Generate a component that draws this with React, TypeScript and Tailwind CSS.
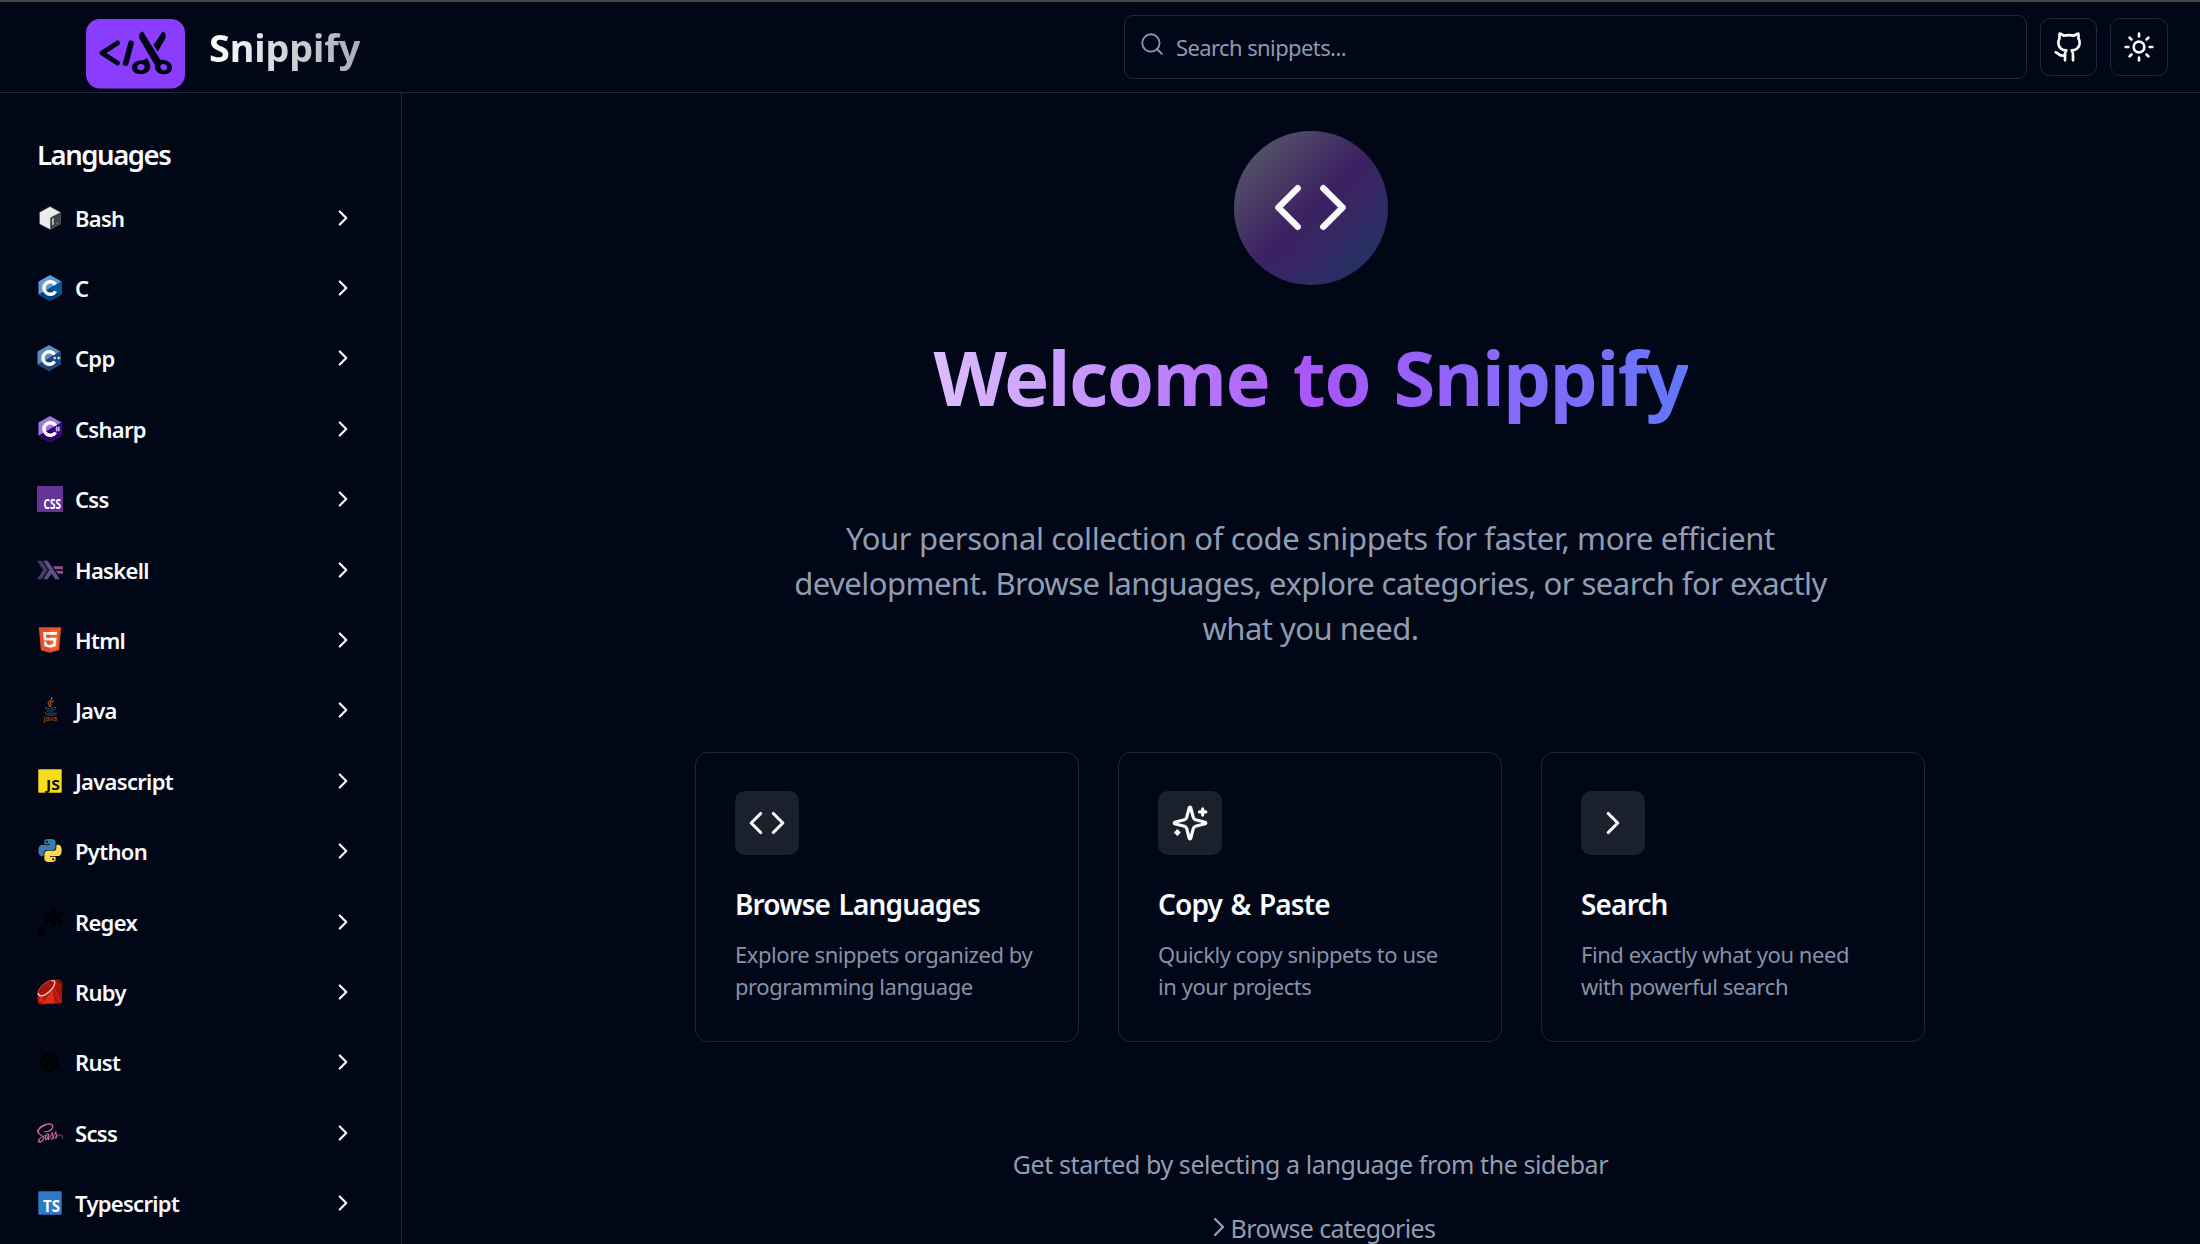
import type { ReactNode } from "react";
import { ChevronRight, Code, Github, Search, Sun } from "lucide-react";
import { FaSass } from "react-icons/fa";
import { SiRust } from "react-icons/si";

const INK = "#020617";

function Logo() {
  return (
    <svg viewBox="0 0 99 70" className="mt-[13px] h-[70px] w-[99px] shrink-0">
      <rect width="99" height="69.6" rx="14" fill="#8b3dff" />
      <g fill="none" stroke={INK} strokeLinecap="round" strokeLinejoin="round" strokeWidth="5">
        <path d="M31.5 24 16 34l15.500 10" />
        <path d="M45 24.200 39.700 44.400" strokeWidth="5.600" />
      </g>
      <path d="M56.800 12.600c-2 .4-3.700 2.200-3.700 4.600 0 1.500.6 2.800 1.400 4.200L69.500 47l6-4.600z" fill={INK} />
      <path d="M76.600 12.600c2 .5 3.200 2.200 3.100 4.400 0 1.200-.4 2.300-1 3.400l-7 12.300-4.100-6.900z" fill={INK} />
      <path
        fillRule="evenodd"
        fill={INK}
        d="M60.600 38.700c2 3 3.700 5.800 3.700 8.800 0 4.600-4.200 7.700-9.300 7.700s-9.100-2.600-9.100-6.700c0-4.300 4.200-6.800 8.300-7.100 3.200-.3 5.200-.7 6.400-2.700zM54.900 45c-2.200 0-3.700 1.400-3.700 3.200s1.300 3.100 3.500 3.100c2.300 0 4-1.500 4-3.400 0-1.700-1.500-2.900-3.800-2.900z"
      />
      <path
        fillRule="evenodd"
        fill={INK}
        d="M75 40.800c6.400 0 11.100 3.200 11.100 7.700 0 4.100-3.600 6.800-8.300 6.800-5.400 0-9-3.300-9-8zm2.500 4.200c-2.100 0-3.400 1.100-3.200 2.900.3 2 1.900 3.400 3.900 3.400 2.100 0 3.300-1.400 3.100-3.100-.2-1.900-1.800-3.200-3.800-3.200z"
      />
    </svg>
  );
}

function HexIcon({ light, mid, dark, suffix, shift }: { light: string; mid: string; dark: string; suffix?: "++" | "#"; shift?: boolean }) {
  return (
    <svg viewBox="0 0 26 26" className={shift ? "size-[26px] -translate-x-px" : "size-[26px]"}>
      <path d="M13 0 24.500 6.500v13L13 26 1.500 19.500v-13z" fill={light} />
      <path d="M24.500 6.500v13L13 26 1.500 19.500z" fill={dark} />
      <path d="M24.200 6.400q.3.400.3 1v11.400q0 .6-.4 1L13 13z" fill={mid} />
      <path d="M18.600 9.700A6.300 6.300 0 1 0 18.600 16.300" fill="none" stroke="#fff" strokeWidth="3.400" />
      {suffix === "++" && <path d="M17.400 13h2.800m-1.400-1.400v2.800M21.300 13h2.800m-1.400-1.400v2.800" stroke="#fff" strokeWidth="1" />}
      {suffix === "#" && <path d="M19.700 10.500v5m2-5v5m-3.200-3.500h4.600m-4.600 2h4.600" stroke="#fff" strokeWidth=".7" />}
    </svg>
  );
}

function TileIcon({ label, tile, ink, size, full }: { label: string; tile: string; ink: string; size: number; full?: boolean }) {
  const inset = full ? 0 : 1.3;
  return (
    <svg viewBox="0 0 26 26" className="size-[26px]">
      <rect x={inset} y={inset} width={26 - inset * 2} height={26 - inset * 2} rx={full ? 0 : 0.8} fill={tile} />
      <text x={full ? 24 : 23} y={full ? 23.4 : 22.4} textAnchor="end" textLength={full ? 17.5 : label === "TS" ? 17 : 14} lengthAdjust="spacingAndGlyphs" fontFamily="Noto Sans" fontWeight="700" fontSize={size} fill={ink}>
        {label}
      </text>
    </svg>
  );
}

function BashIcon() {
  return (
    <svg viewBox="0 0 26 26" className="size-[26px]">
      <path d="M13 1.500 23.500 7.300v11.600L13 24.500 2.500 18.900V7.300z" fill="#ececec" stroke="#4a4d4f" strokeWidth=".6" />
      <path d="M13.200 24.500V13.600q0-.9.8-1.400l9.500-5v11.700z" fill="#3c4245" />
      <path d="M16.900 14.200c-1.800.2-2.200 1.500-1.200 2.300s1.200 2.100-.6 2.600M16 13.200v7" fill="none" stroke="#f0f0f0" strokeWidth=".8" />
      <path d="m18.700 19 2.600-1.400" stroke="#4da925" strokeWidth=".9" />
    </svg>
  );
}

function HaskellIcon() {
  return (
    <svg viewBox="0 0 24 24" className="size-[26px]">
      <path d="M0 3.535 5.647 12 0 20.465h4.235L9.883 12 4.235 3.535z" fill="#453a62" />
      <path d="M5.647 3.535 11.294 12l-5.647 8.465h4.235l3.530-5.290 3.530 5.290h4.234L9.883 3.535z" fill="#5e5086" />
      <path d="M14.588 8.473l1.883 2.822H24V8.473zm2.824 4.232 1.882 2.822H24v-2.822z" fill="#8f4e8b" />
    </svg>
  );
}

function HtmlIcon() {
  return (
    <svg viewBox="0 0 128 128" className="size-[26px]">
      <path fill="#e44d26" d="M19.037 113.876 9.032 1.661h109.936l-10.016 112.198-45.019 12.480z" />
      <path fill="#f16529" d="m64 116.800 36.378-10.086 8.559-95.878H64z" />
      <path fill="#ebebeb" d="M64 52.455H45.788L44.530 38.361H64V24.599H29.489l.33 3.692 3.382 37.927H64zm0 35.743-.061.017-15.327-4.140-.979-10.975H33.816l1.928 21.609 28.193 7.826.063-.017z" />
      <path fill="#fff" d="M63.952 52.455v13.763h16.947l-1.597 17.849-15.350 4.143v14.319l28.215-7.820.207-2.325 3.234-36.233.335-3.696h-3.708zm0-27.856v13.762h33.244l.276-3.092.628-6.978.329-3.692z" />
    </svg>
  );
}

function JavaIcon() {
  return (
    <svg viewBox="0 0 26 26" className="size-[26px]">
      <g fill="none" strokeLinecap="round">
        <path d="M14.600.4c1.700 3-3.900 3.800-3.400 6.200.2 1 1.400 1.600 1.500 2.700M16.600 3.900c-2.500.8-3.800 2-2.800 3.200.7.900.3 1.500-.3 2.200" stroke="#a85410" strokeWidth="1.200" />
        <path d="M9.700 10.200c-2.800.7-2 1.300 2.600 1.200 2 0 3.800-.3 4.800-.6M9.800 12.700c1 .8 4.600.8 6.200.1M10.400 14.600c1 .7 3.500.7 5 .1M17.400 10.300c2.400-.4 2.300 1.800-.3 2.900M8.500 15.300c-4 1.500 8.500 2.700 10.500.3M9.400 18c4 .6 9 .3 10.400-1" stroke="#2f5468" strokeWidth=".9" />
      </g>
      <text x="6.400" y="24.200" textLength="13.500" lengthAdjust="spacingAndGlyphs" fontFamily="Noto Sans" fontSize="7.500" fill="#b85f12">
        Java
      </text>
    </svg>
  );
}

function PythonIcon() {
  return (
    <svg viewBox="-1.500 -1 27 27" className="size-[26px]">
      <path
        fill="#3d7bab"
        d="M14.250.180l.9.2.73.26.59.3.45.32.34.34.25.34.16.33.1.3.04.26.02.2-.01.13V8.500l-.05.63-.13.55-.21.46-.26.38-.3.31-.33.25-.35.19-.35.14-.33.1-.3.07-.26.04-.21.02H8.770l-.69.05-.59.14-.5.22-.41.27-.33.32-.27.35-.2.36-.15.37-.1.35-.07.32-.04.27-.02.21v3.060H3.170l-.21-.03-.28-.07-.32-.12-.35-.18-.36-.26-.36-.36-.35-.46-.32-.59-.28-.73-.21-.88-.14-1.050-.05-1.230.06-1.220.16-1.040.24-.87.32-.71.36-.57.4-.44.42-.33.42-.24.4-.16.36-.1.32-.05.24-.01h.16l.06.01h8.160v-.83H6.180l-.01-2.750-.02-.37.05-.34.11-.31.17-.28.25-.26.31-.23.38-.2.44-.18.51-.15.58-.12.64-.1.71-.06.77-.04.84-.02 1.270.05zm-6.300 1.980-.23.33-.08.41.08.41.23.34.33.22.41.09.41-.09.33-.22.23-.34.08-.41-.08-.41-.23-.33-.33-.22-.41-.09-.41.09z"
      />
      <path
        fill="#ffd94a"
        d="M21.040 6.110l.28.06.32.12.35.18.36.27.36.35.35.47.32.59.28.73.21.88.14 1.040.05 1.230-.06 1.230-.16 1.040-.24.86-.32.71-.36.57-.4.45-.42.33-.42.24-.4.16-.36.09-.32.05-.24.02-.16-.01h-8.220v.82h5.840l.01 2.760.02.36-.05.34-.11.31-.17.29-.25.25-.31.24-.38.2-.44.17-.51.15-.58.13-.64.09-.71.07-.77.04-.84.01-1.270-.04-1.070-.14-.9-.2-.73-.25-.59-.3-.45-.33-.34-.34-.25-.34-.16-.33-.1-.3-.04-.25-.02-.2.01-.13v-5.340l.05-.64.13-.54.21-.46.26-.38.3-.32.33-.24.35-.2.35-.14.33-.1.3-.06.26-.04.21-.02.13-.01h5.840l.69-.05.59-.14.5-.21.41-.28.33-.32.27-.35.2-.36.15-.36.1-.35.07-.32.04-.28.02-.21V6.070h2.090l.14.01zm-6.470 14.250-.23.33-.08.41.08.41.23.33.33.23.41.08.41-.08.33-.23.23-.33.08-.41-.08-.41-.23-.33-.33-.23-.41-.08-.41.08z"
      />
    </svg>
  );
}

function RegexIcon() {
  return (
    <svg viewBox="0 0 26 26" className="size-[26px]">
      <circle cx="3.600" cy="22.300" r="3.600" fill="#000" />
      <path d="M17.200 0v18M9.400 4.500l15.600 9M9.400 13.500l15.600-9" stroke="#000" strokeWidth="3.400" />
    </svg>
  );
}

function RubyIcon() {
  return (
    <svg viewBox="0 0 26 26" className="size-[26px]">
      <path d="M.6 12.500C4 5.500 10 1 15.500.5L21 .6c2.500.2 4.400 2 4.400 4.400L24.500 24.600 3.500 25.600C1.500 25.200.4 23.500.5 21z" fill="#b3160b" />
      <path d="M2.300 15.200C1.300 10.500 9 2.600 14.500 2c4.800-.3 1.800 6-2.700 10.300-3.800 3.500-8.200 5-9.500 2.900z" fill="#a3140a" />
      <path d="M1 13.800c.3 2.200 1.800 3.300 4.200 3C9.500 16 17 9.500 17.800 4.200 18 2.200 16.900 1.400 14.500 1.700" fill="none" stroke="#f2c9c2" strokeWidth="1.300" />
      <path d="M1 12.500C4 6.500 9.500 2.200 14.500 1.300" fill="none" stroke="#c4594e" strokeWidth=".7" />
      <path d="m16.500 10.500 8.500-4v17.200z" fill="#a5130a" />
      <path d="m15.500 10.200 1.900 13.500-10.500.6zM4 17.600l3 6.800-5.200-3.200z" fill="#dd2e1c" />
      <path d="m16 9.700-8.800 14.800M16.500 9l8 14.500M4.300 17.200l2.600 7.300" stroke="#e8503c" strokeWidth=".5" />
      <path d="m18.500 1 6.500 1.500v4z" fill="#7d0c05" />
    </svg>
  );
}

function SparklesIcon({ className }: { className?: string }) {
  return (
    <svg viewBox="0 0 24 24" fill="none" stroke="currentColor" strokeWidth="2" strokeLinecap="round" strokeLinejoin="round" className={className}>
      <path d="M9.937 15.500A2 2 0 0 0 8.500 14.063l-6.135-1.582a.5.5 0 0 1 0-.962L8.500 9.936A2 2 0 0 0 9.937 8.500l1.582-6.135a.5.5 0 0 1 .963 0L14.063 8.500A2 2 0 0 0 15.500 9.937l6.135 1.581a.5.5 0 0 1 0 .964L15.500 14.063a2 2 0 0 0-1.437 1.437l-1.582 6.135a.5.5 0 0 1-.963 0z" />
      <path d="M20 3v4M22 5h-4M4 17v2M5 18H3" />
    </svg>
  );
}

const languages: { name: string; icon: ReactNode }[] = [
  { name: "Bash", icon: <BashIcon /> },
  { name: "C", icon: <HexIcon light="#659ad2" mid="#00599c" dark="#004482" /> },
  { name: "Cpp", icon: <HexIcon light="#5c8dbc" mid="#1a4674" dark="#1a4674" suffix="++" shift /> },
  { name: "Csharp", icon: <HexIcon light="#a179dc" mid="#390091" dark="#280068" suffix="#" /> },
  { name: "Css", icon: <TileIcon label="CSS" tile="#663399" ink="#ffffff" size={13.3} full /> },
  { name: "Haskell", icon: <HaskellIcon /> },
  { name: "Html", icon: <HtmlIcon /> },
  { name: "Java", icon: <JavaIcon /> },
  { name: "Javascript", icon: <TileIcon label="JS" tile="#f5de19" ink="#111111" size={15} /> },
  { name: "Python", icon: <PythonIcon /> },
  { name: "Regex", icon: <RegexIcon /> },
  { name: "Ruby", icon: <RubyIcon /> },
  { name: "Rust", icon: <SiRust className="size-[19px] text-black" /> },
  { name: "Scss", icon: <FaSass className="size-[26px] text-[#cd6799]" /> },
  { name: "Typescript", icon: <TileIcon label="TS" tile="#3178c6" ink="#ffffff" size={16} /> },
];

const features = [
  { title: "Browse Languages", lines: ["Explore snippets organized by", "programming language"], Icon: Code },
  { title: "Copy & Paste", lines: ["Quickly copy snippets to use", "in your projects"], Icon: SparklesIcon },
  { title: "Search", lines: ["Find exactly what you need", "with powerful search"], Icon: ChevronRight },
];

function Header() {
  return (
    <header className="flex h-[93px] shrink-0 items-center border-t-2 border-b border-t-[#454545] border-b-[#202939] pr-8 pl-[86px]">
      <Logo />
      <span className="ml-[24px] bg-gradient-to-r from-white to-[#a9acb5] bg-clip-text text-[38px] leading-[58px] font-bold tracking-[-0.2px] text-transparent">
        Snippify
      </span>
      <div className="ml-auto flex h-16 w-[903px] items-center rounded-[9px] border border-[#1e293a] pl-[14px]">
        <Search className="-mt-[6px] size-[26px] text-[#8b98ae]" strokeWidth={1.7} />
        <span className="ml-[11px] text-[22px] tracking-[-0.6px] text-[#8d9ab0]">Search snippets...</span>
      </div>
      <button className="ml-[13px] flex h-[58px] w-[57px] items-center justify-center rounded-[10px] border border-[#1e293a]">
        <Github className="size-8 text-slate-50" />
      </button>
      <button className="ml-[13px] flex size-[58px] items-center justify-center rounded-[10px] border border-[#1e293a]">
        <Sun className="size-8 text-slate-50" />
      </button>
    </header>
  );
}

function Sidebar() {
  return (
    <aside className="w-[402px] shrink-0 border-r border-[#202939] pt-[38.500px] pr-[45px] pl-9">
      <h2 className="mb-[6px] pl-px text-[27.500px] leading-[45px] font-semibold tracking-[-1.45px]">Languages</h2>
      <ul>
        {languages.map(({ name, icon }) => (
          <li key={name} className="flex h-[70.400px] items-center">
            <span className="flex w-[27px] shrink-0 items-center justify-center">{icon}</span>
            <span className="ml-[12px] text-[22px] leading-8 font-semibold tracking-[-0.7px]">{name}</span>
            <ChevronRight className="ml-auto size-[26px]" />
          </li>
        ))}
      </ul>
    </aside>
  );
}

export default function App() {
  return (
    <div className="flex h-[1244px] w-[2200px] flex-col overflow-hidden bg-[#010716] font-['Noto_Sans',sans-serif] text-slate-50">
      <Header />
      <div className="flex min-h-0 flex-1">
        <Sidebar />
        <main className="flex flex-1 flex-col items-center overflow-hidden pt-[38px] pl-[19px]">
          <div className="flex size-[154px] shrink-0 items-center justify-center rounded-full bg-gradient-to-br from-[#5c5f68] via-[#3d2062] to-[#153566]">
            <Code className="-mt-px size-[77px]" />
          </div>
          <h1 className="mt-[53px] bg-gradient-to-r from-[#dcbdfe] via-[#a855f7] to-[#6176fb] bg-clip-text pb-4 text-[76px] leading-[77px] font-bold tracking-[-1.45px] [word-spacing:5px] whitespace-nowrap text-transparent">
            Welcome to Snippify
          </h1>
          <p className="mt-[85px] text-center text-[31px] leading-[45px] tracking-[-0.53px] whitespace-nowrap text-[#8f9db3]">
            <span className="tracking-[-0.37px]">Your personal collection of code snippets for faster, more efficient</span>
            <br />
            development. Browse languages, explore categories, or search for exactly
            <br />
            what you need.
          </p>
          <div className="mt-[101px] -ml-px grid w-[1230px] shrink-0 grid-cols-3 gap-[39px]">
            {features.map(({ title, lines, Icon }) => (
              <section key={title} className="h-[290px] rounded-[13px] border border-[#1e2635] px-[39px] pt-[38px]">
                <div className="flex size-16 items-center justify-center rounded-[10px] bg-[#1b202d]">
                  <Icon className="size-[38px]" />
                </div>
                <h3 className="mt-[27px] text-[28px] leading-[45px] font-semibold tracking-[-0.84px] [word-spacing:2px]">{title}</h3>
                <p className="mt-[11px] text-[22px] leading-[32.300px] tracking-[-0.45px] whitespace-nowrap text-[#8592a8]">
                  {lines[0]}
                  <br />
                  {lines[1]}
                </p>
              </section>
            ))}
          </div>
          <p className="mt-[103px] text-[25px] leading-[38px] tracking-[-0.42px] whitespace-nowrap text-[#8f9db3]">
            Get started by selecting a language from the sidebar
          </p>
          <div className="mt-[26px] ml-[17px] flex h-[38px] shrink-0 items-center text-[#8f9db3]">
            <ChevronRight className="-mt-[3px] -mr-1 size-8" strokeWidth={1.8} />
            <span className="text-[25px] leading-[38px] tracking-[-0.62px]">Browse categories</span>
          </div>
        </main>
      </div>
    </div>
  );
}
